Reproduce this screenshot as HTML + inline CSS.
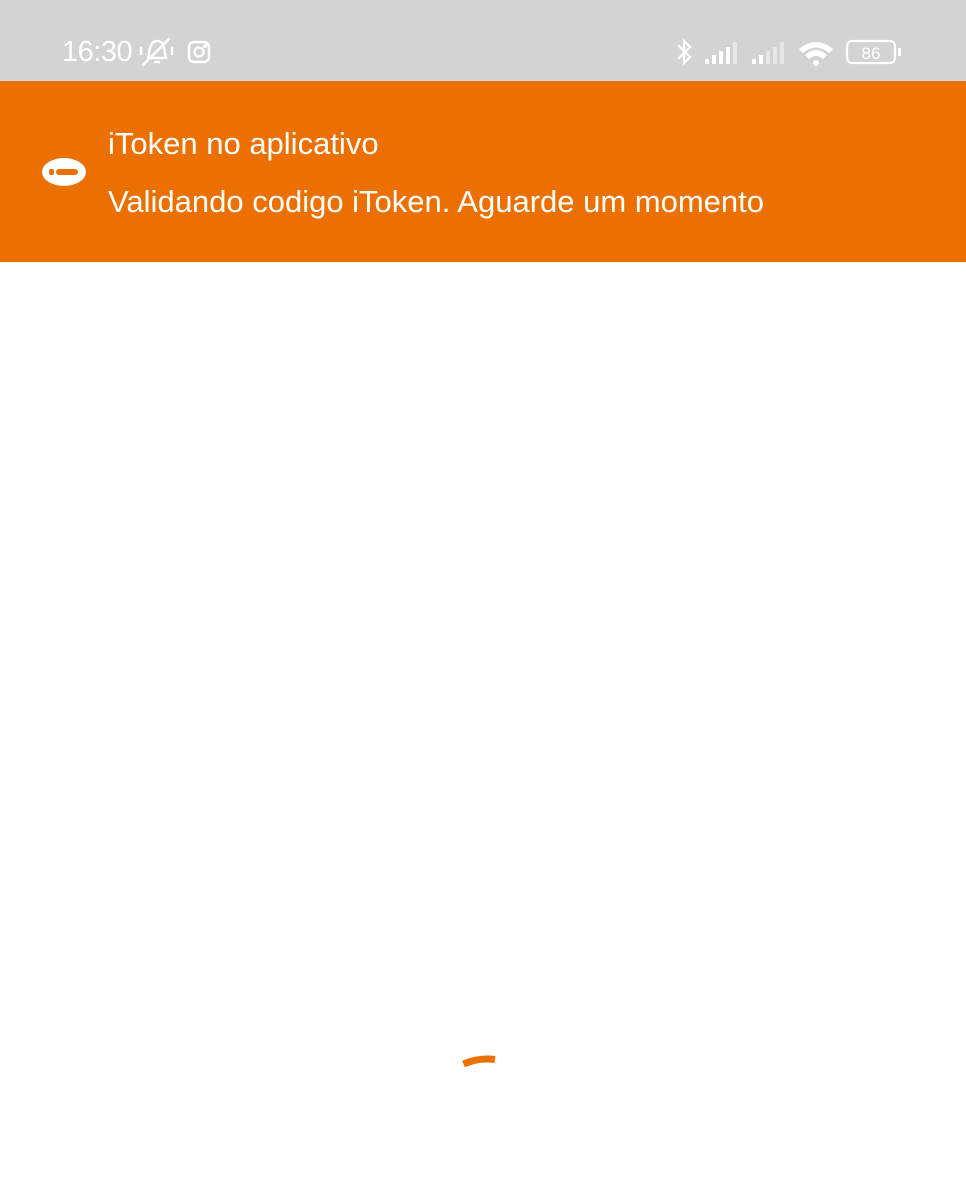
<!DOCTYPE html>
<html><head><meta charset="utf-8"><style>
body{margin:0;width:966px;height:1200px;background:#fff;font-family:"Liberation Sans","DejaVu Sans",sans-serif;position:relative;overflow:hidden}
.sb{position:absolute;left:0;top:0;width:966px;height:81px;background:#d3d3d3}
.time{position:absolute;left:62px;top:36px;font-size:29px;color:#fff;letter-spacing:-0.5px}
.or{position:absolute;left:0;top:81px;width:966px;height:181px;background:#ec7000;color:#fff}
.t1{position:absolute;left:108px;top:45px;font-size:31px}
.t2{position:absolute;left:108px;top:103px;font-size:31px}
</style></head><body>
<div class="sb">
<div class="time">16:30</div>
<svg style="position:absolute;left:138px;top:36px" width="40" height="32" viewBox="0 0 40 32" fill="none" stroke="#fff" stroke-width="2.5" stroke-linecap="round">
<path d="M10 22 L12 12 Q14 5 19 5 Q25 5 26 12 L28 22 Z"/><path d="M17 26 h4"/><path d="M5 29 L31 3"/><path d="M3 12 v6 M34 12 v6"/></svg>
<svg style="position:absolute;left:187px;top:40px" width="24" height="24" viewBox="0 0 24 24" fill="none" stroke="#fff" stroke-width="2.4"><rect x="2" y="2" width="20" height="20" rx="5"/><circle cx="12" cy="12" r="4.5"/><circle cx="18" cy="6" r="0.8" fill="#fff"/></svg>
<svg style="position:absolute;left:670px;top:36px" width="240" height="34" viewBox="0 0 240 34" fill="#fff">
<path d="M8 9 L20 21 L14 27 V5 L20 11 L8 23" fill="none" stroke="#fff" stroke-width="2.3"/>
<rect x="35" y="23" width="4" height="5"/><rect x="42" y="19" width="4" height="9"/><rect x="49" y="15" width="4" height="13"/><rect x="56" y="11" width="4" height="17"/><rect x="63" y="6" width="4" height="22" opacity=".45"/>
<rect x="82" y="23" width="4" height="5"/><rect x="89" y="19" width="4" height="9"/><rect x="96" y="15" width="4" height="13" opacity=".45"/><rect x="103" y="11" width="4" height="17" opacity=".45"/><rect x="110" y="6" width="4" height="22" opacity=".45"/>
<path d="M129 13 Q146 -1 163 13 L159 17 Q146 6 133 17Z"/><path d="M135 19 Q146 9 157 19 L153 23 Q146 17 139 23Z"/><circle cx="146" cy="27" r="3"/>
<rect x="177" y="5" width="48" height="22" rx="5" fill="none" stroke="#fff" stroke-width="2.2"/><rect x="228" y="12" width="3" height="8"/>
<text x="201" y="23" font-size="17" text-anchor="middle" font-family="Liberation Sans">86</text>
</svg>
</div>
<div class="or">
<svg style="position:absolute;left:42px;top:76px" width="44" height="30" viewBox="0 0 44 30"><ellipse cx="22" cy="15" rx="22" ry="14" fill="#fff"/><rect x="7" y="12" width="5" height="6" rx="2" fill="#ec7000"/><rect x="14" y="12" width="22" height="6" rx="3" fill="#ec7000"/></svg>
<div class="t1">iToken no aplicativo</div>
<div class="t2">Validando codigo iToken. Aguarde um momento</div>
</div>
<svg style="position:absolute;left:440px;top:1040px" width="80" height="80" viewBox="0 0 80 80"><path d="M23.5 24 A60 60 0 0 1 55 19.5" fill="none" stroke="#ec7000" stroke-width="7"/></svg>
</body></html>
